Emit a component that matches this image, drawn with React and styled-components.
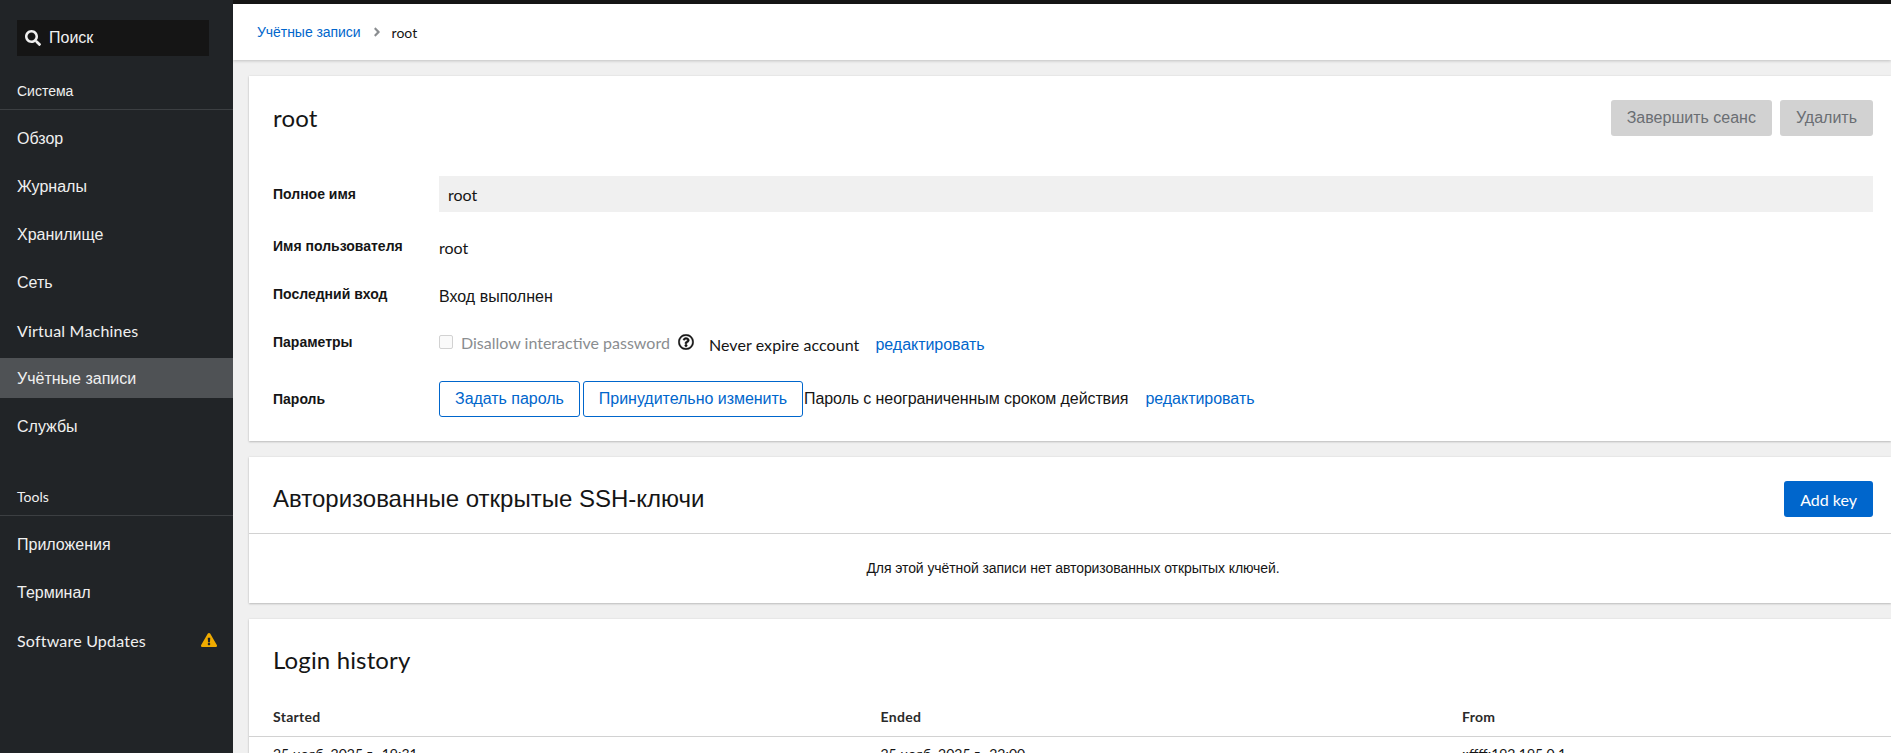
import React from "react";
import styled, { createGlobalStyle, css } from "styled-components";
import { FaSearch, FaExclamationTriangle, FaAngleRight, FaRegQuestionCircle } from "react-icons/fa";

const latinFont = css`font-family: "Lato", "Noto Sans", sans-serif;`;

const Global = createGlobalStyle`
  html, body { margin: 0; padding: 0; height: 100%; overflow: hidden; background: #f0f0f0; }
  body { font-family: "Liberation Sans", Arial, sans-serif; font-size: 16px; color: #151515; }
  * { box-sizing: border-box; }
`;

const Shell = styled.div`display: flex; height: 100vh; overflow: hidden;`;

const Sidebar = styled.aside`
  width: 233px; flex: none; background: #212427; color: #f0f0f0; padding-top: 20px;
`;
const Search = styled.div`
  display: flex; align-items: center; gap: 8px; height: 36px; margin: 0 24px 0 17px;
  padding-left: 8px; background: #151515; color: #f0f0f0;
`;
const Section = styled.section`margin-top: ${p => p.$top}px;`;
const SectionTitle = styled.h2`
  margin: 0; padding: 0 17px 8px; height: 30px; line-height: 23px; font-size: 14px; font-weight: 400;
  color: #f0f0f0; border-bottom: 1px solid #3c3f42;
  ${p => p.$latin && css`${latinFont} line-height: 21px;`}
`;
const NavList = styled.ul`
  list-style: none; margin: 0; padding: 8px 0 0; display: flex; flex-direction: column; gap: 8px;
`;
const NavItem = styled.li`
  display: flex; align-items: center; justify-content: space-between; height: 40px; padding: 2px 16px 0 17px;
  color: #f0f0f0; background: ${p => (p.$active ? "#4f5255" : "transparent")};
  ${p => p.$latin && css`${latinFont} letter-spacing: .2px; padding-top: 0;`}
`;
const WarnIcon = styled(FaExclamationTriangle)`color: #f0ab00; font-size: 16px;`;

const Main = styled.main`flex: 1; min-width: 0; border-top: 4px solid #151515;`;
const Breadcrumb = styled.nav`
  display: flex; align-items: center; height: 56px; padding-left: 24px; background: #fff;
  font-size: 14px; box-shadow: 0 1px 3px rgba(3,3,3,.2);
`;
const Crumb = styled.a`color: #06c; text-decoration: none; letter-spacing: -.05px;`;
const CrumbSep = styled(FaAngleRight)`color: #8a8d90; font-size: 14px; margin: 0 8px 0 9px;`;
const CrumbCurrent = styled.span`${latinFont} color: #151515;`;

const Cards = styled.div`display: flex; flex-direction: column; gap: 16px; padding: 16px 0 0 16px;`;
const Card = styled.section`
  background: #fff; box-shadow: 0 1px 2px rgba(3,3,3,.2), 0 0 2px rgba(3,3,3,.08);
`;
const DetailsCard = styled(Card)`padding: 24px 18px 24px 24px;`;
const CardHead = styled.header`
  display: flex; align-items: center; justify-content: space-between; min-height: 36px; gap: 16px;
`;
const Title = styled.h1`
  margin: 0; font-size: 24px; font-weight: 400; line-height: 36px; color: #151515;
  ${p => p.$latin && css`${latinFont} letter-spacing: .15px;`}
`;
const Actions = styled.div`display: flex; gap: 8px;`;
const Button = styled.button`
  height: 36px; padding: 0 15px; border-radius: 3px; font: 16px "Liberation Sans", Arial, sans-serif;
  border: 1px solid transparent; white-space: nowrap;
  ${p => p.$kind === "disabled" && css`background: #d2d2d2; color: #6a6e73;`}
  ${p => p.$kind === "primary" && css`background: #06c; color: #fff; ${latinFont}`}
  ${p => p.$kind === "secondary" && css`background: #fff; color: #06c; border-color: #06c; letter-spacing: -.03px;`}
`;

const Form = styled.div`
  display: grid; grid-template-columns: 166px 1fr; grid-template-rows: 36px 24px 24px 25px 36px;
  row-gap: 24px; margin-top: 40px; align-items: center;
`;
const Label = styled.div`
  font-size: 14px; font-weight: 700; color: #151515; margin-bottom: ${p => p.$lift || 0}px;
`;
const ReadOnly = styled.div`
  height: 36px; line-height: 37px; padding-left: 9px; background: #f0f0f0; ${latinFont}
`;
const Value = styled.div`
  display: flex; align-items: center; padding-top: 2px;
  ${p => p.$latin && css`${latinFont} padding-top: 0; margin-bottom: 2px;`}
  ${p => p.$flush && css`padding-top: 0;`}
`;
const CheckLabel = styled.label`
  display: flex; align-items: center; gap: 8px; color: #8a8d90; ${latinFont} margin-bottom: 5px;
`;
const CheckBox = styled.span`
  width: 14px; height: 14px; border: 1px solid #d2d2d2; border-radius: 2px; background: #fafafa; flex: none;
`;
const HelpIcon = styled(FaRegQuestionCircle)`
  font-size: 16px; color: #151515; margin: 0 15px 5px 8px; flex: none; stroke: currentColor; stroke-width: 12px;
`;
const Plain = styled.span`
  ${p => (p.$latin ? css`${latinFont} letter-spacing: .08px;` : css`letter-spacing: -.1px;`)}
`;
const EditLink = styled.a`
  color: #06c; text-decoration: none; margin-left: ${p => p.$gap}px; letter-spacing: -.03px;
  font-family: "Liberation Sans", Arial, sans-serif;
`;
const ButtonGroup = styled.div`display: flex; gap: 3px; margin-right: 1px;`;

const KeysHead = styled(CardHead)`
  height: 77px; padding: 24px 18px 16px 24px; border-bottom: 1px solid #d2d2d2;
`;
const EmptyText = styled.p`
  margin: 0; height: 69px; line-height: 69px; text-align: center; font-size: 14px; color: #151515;
  padding-left: 6px; letter-spacing: -.08px;
`;

const HistoryHead = styled(CardHead)`height: 59px; padding: 23px 18px 0 24px;`;
const TableRow = styled.div`
  display: grid; grid-template-columns: 607.5px 581.5px 1fr; padding: 6px 18px 0 24px;
  font-size: 14px; line-height: 21px; ${latinFont}
  ${p => p.$head && css`
    margin-top: 28px; height: 31px; padding-top: 0; line-height: 22px; font-weight: 700;
    letter-spacing: .3px; color: #2a2a2a; border-bottom: 1px solid #d2d2d2;
  `}
`;

export default function App() {
  return (
    <Shell>
      <Global />
      <Sidebar>
        <Search><FaSearch size={16} /><span>Поиск</span></Search>
        <Section $top={24}>
          <SectionTitle>Система</SectionTitle>
          <NavList>
            <NavItem>Обзор</NavItem>
            <NavItem>Журналы</NavItem>
            <NavItem>Хранилище</NavItem>
            <NavItem>Сеть</NavItem>
            <NavItem $latin>Virtual Machines</NavItem>
            <NavItem $active>Учётные записи</NavItem>
            <NavItem>Службы</NavItem>
          </NavList>
        </Section>
        <Section $top={40}>
          <SectionTitle $latin>Tools</SectionTitle>
          <NavList>
            <NavItem>Приложения</NavItem>
            <NavItem>Терминал</NavItem>
            <NavItem $latin>Software Updates<WarnIcon /></NavItem>
          </NavList>
        </Section>
      </Sidebar>
      <Main>
        <Breadcrumb>
          <Crumb href="#">Учётные записи</Crumb>
          <CrumbSep />
          <CrumbCurrent>root</CrumbCurrent>
        </Breadcrumb>
        <Cards>
          <DetailsCard>
            <CardHead>
              <Title $latin>root</Title>
              <Actions>
                <Button $kind="disabled">Завершить сеанс</Button>
                <Button $kind="disabled">Удалить</Button>
              </Actions>
            </CardHead>
            <Form>
              <Label>Полное имя</Label>
              <ReadOnly>root</ReadOnly>
              <Label $lift={4}>Имя пользователя</Label>
              <Value $latin>root</Value>
              <Label $lift={4}>Последний вход</Label>
              <Value>Вход выполнен</Value>
              <Label $lift={5}>Параметры</Label>
              <Value $flush>
                <CheckLabel><CheckBox />Disallow interactive password</CheckLabel>
                <HelpIcon />
                <Plain $latin>Never expire account</Plain>
                <EditLink href="#" $gap={16}>редактировать</EditLink>
              </Value>
              <Label>Пароль</Label>
              <Value $flush>
                <ButtonGroup>
                  <Button $kind="secondary">Задать пароль</Button>
                  <Button $kind="secondary">Принудительно изменить</Button>
                </ButtonGroup>
                <Plain>Пароль с неограниченным сроком действия</Plain>
                <EditLink href="#" $gap={17}>редактировать</EditLink>
              </Value>
            </Form>
          </DetailsCard>
          <Card>
            <KeysHead>
              <Title>Авторизованные открытые SSH-ключи</Title>
              <Button $kind="primary">Add key</Button>
            </KeysHead>
            <EmptyText>Для этой учётной записи нет авторизованных открытых ключей.</EmptyText>
          </Card>
          <Card>
            <HistoryHead><Title $latin>Login history</Title></HistoryHead>
            <TableRow $head>
              <span>Started</span><span>Ended</span><span>From</span>
            </TableRow>
            <TableRow>
              <span>25 нояб. 2025 г., 19:31</span>
              <span>25 нояб. 2025 г., 22:00</span>
              <span>::ffff:192.195.0.1</span>
            </TableRow>
          </Card>
        </Cards>
      </Main>
    </Shell>
  );
}
